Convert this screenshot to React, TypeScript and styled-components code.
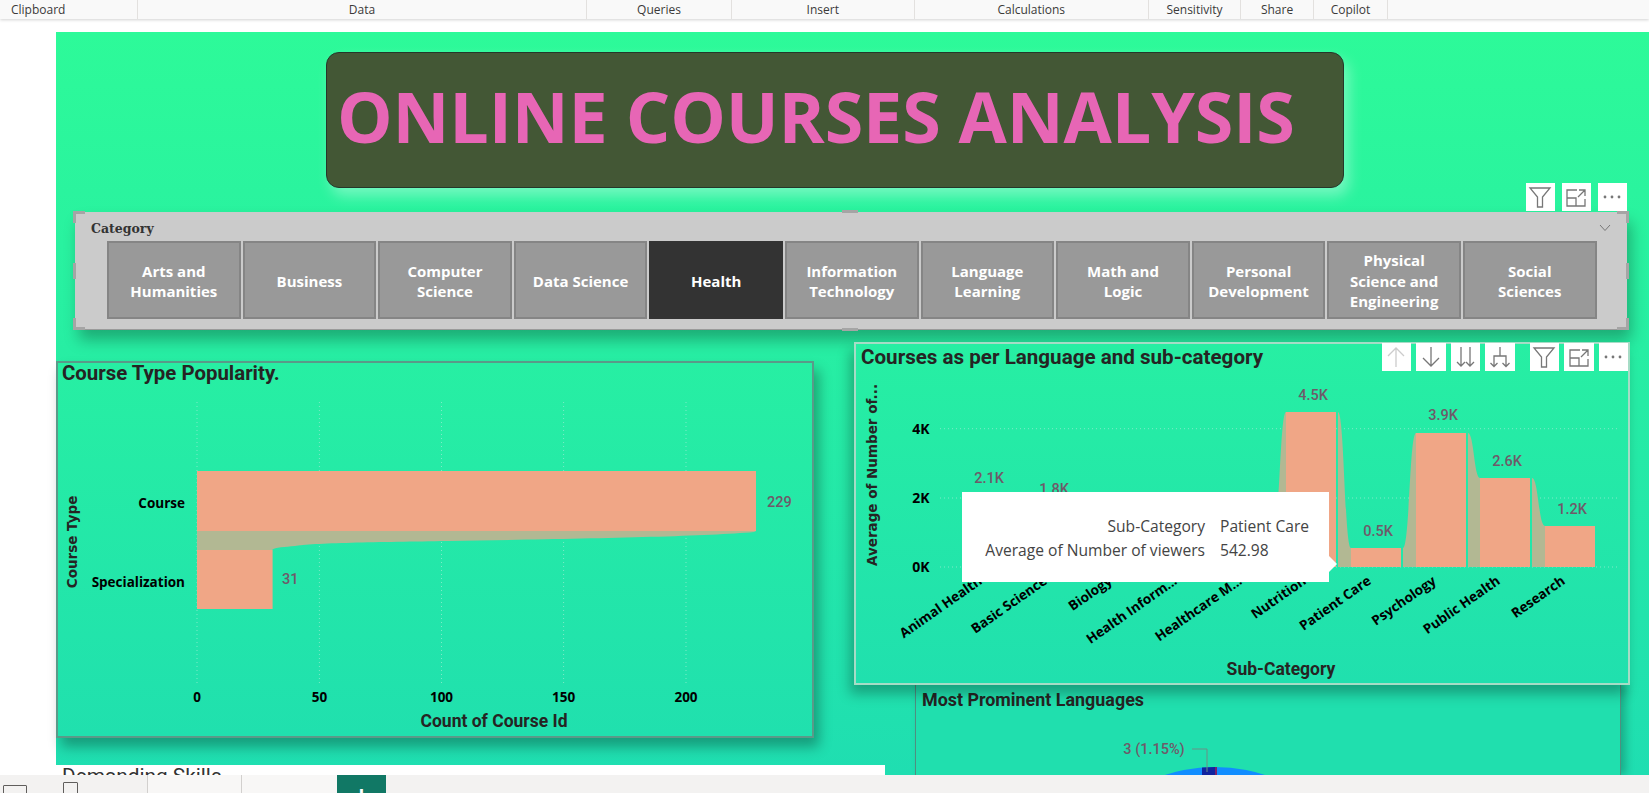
import React from "react";
import styled, { createGlobalStyle } from "styled-components";

const UI_FONT = `"Open Sans", "Noto Sans", sans-serif`;
const HEAD_FONT = `Roboto, "Liberation Sans", sans-serif`;
const WIDE_FONT = `"DejaVu Sans", Verdana, sans-serif`;

const BAR = "#f0a686";
const RIBBON = "#b2b893";
const VALUE = "#6f5a69";
const BASE = 567;

const GlobalStyle = createGlobalStyle`
  html, body {
    margin: 0;
    height: 100%;
    overflow: hidden;
    background: #fff;
    font-family: ${UI_FONT};
  }
  #root { height: 100%; }
`;

const Page = styled.div`
  height: 793px;
  display: flex;
  flex-direction: column;
  overflow: hidden;
`;

const Ribbon = styled.header`
  position: relative;
  z-index: 3;
  flex: 0 0 19px;
  display: flex;
  background: #f9f9f9;
  box-shadow: 0 1px 3px rgba(0, 0, 0, 0.18);
`;

const RibbonGroup = styled.div<{ $w: number; $left?: boolean }>`
  box-sizing: border-box;
  width: ${(p) => p.$w}px;
  display: flex;
  align-items: center;
  justify-content: ${(p) => (p.$left ? "flex-start" : "center")};
  padding-left: ${(p) => (p.$left ? "11px" : "0")};
  border-right: 1px solid #e3e1df;
  font-size: 12px;
  color: #3b3a39;
`;

const Main = styled.main`
  flex: 1;
  min-height: 0;
  overflow: hidden;
  padding: 13px 0 0 56px;
`;

const Canvas = styled.div`
  height: 743px;
  background: linear-gradient(180deg, #2dfa99 0%, #1fdeb1 100%);
  padding-top: 20px;
  box-sizing: border-box;
`;

const TitleBox = styled.div`
  box-sizing: border-box;
  width: 1018px;
  height: 136px;
  margin-left: 270px;
  padding: 0 0 8px 10px;
  display: flex;
  align-items: center;
  background: #435735;
  border: 1px solid #25362a;
  border-radius: 13px;
  box-shadow: 5px 8px 14px rgba(255, 255, 255, 0.35);
`;

const BigTitle = styled.h1`
  margin: 0;
  font-family: ${UI_FONT};
  font-size: 70px;
  font-weight: 700;
  letter-spacing: -0.13px;
  line-height: 1;
  white-space: nowrap;
  color: #e766b5;
`;

const Slicer = styled.section`
  position: relative;
  box-sizing: border-box;
  width: 1552px;
  height: 118px;
  margin: 24px 0 0 19px;
  padding: 8px 0 0 16px;
  background: #cbcbcb;
  border-bottom: 1px solid #9a9a9a;
  box-shadow: 4px 10px 14px rgba(0, 0, 0, 0.28);
`;

const SlicerLabel = styled.div`
  height: 21px;
  font: bold 12.5px/18px "DejaVu Serif", "Liberation Serif", serif;
  color: #333;
`;

const Tiles = styled.div`
  display: flex;
  gap: 2px;
  margin-left: 16px;
`;

const Tile = styled.div<{ $active?: boolean }>`
  box-sizing: border-box;
  width: 133.6px;
  height: 78px;
  padding-top: 2px;
  display: flex;
  align-items: center;
  justify-content: center;
  text-align: center;
  white-space: pre-line;
  font-size: 15px;
  font-weight: 700;
  line-height: 20.4px;
  color: #fff;
  background: ${(p) => (p.$active ? "#333" : "#999")};
  border: 2px solid ${(p) => (p.$active ? "#333" : "#858585")};
`;

const Corner = styled.span<{ $v: "top" | "bottom"; $h: "left" | "right" }>`
  position: absolute;
  width: 9px;
  height: 9px;
  ${(p) => p.$v}: -1px;
  ${(p) => p.$h}: -2px;
  border-${(p) => p.$v}: 3px solid #a5a5a5;
  border-${(p) => p.$h}: 3px solid #a5a5a5;
`;

const SideGrip = styled.span<{ $side: "left" | "right" }>`
  position: absolute;
  ${(p) => p.$side}: -2px;
  top: 51px;
  width: 3px;
  height: 16px;
  background: #a5a5a5;
`;

const EdgeGrip = styled.span<{ $side: "top" | "bottom" }>`
  position: absolute;
  ${(p) => p.$side}: -2px;
  left: 767px;
  width: 16px;
  height: 3px;
  background: #a5a5a5;
`;

const Chevron = styled.svg`
  position: absolute;
  top: 12px;
  right: 16px;
`;

const ToolStrip = styled.div<{ $top: string; $gap?: number }>`
  position: absolute;
  right: 0;
  ${(p) => p.$top};
  display: flex;
  gap: ${(p) => p.$gap ?? 5}px;
`;

const ToolButton = styled.div<{ $gapBefore?: boolean }>`
  width: 29.5px;
  height: 28px;
  margin-left: ${(p) => (p.$gapBefore ? "10px" : "0")};
  display: flex;
  align-items: center;
  justify-content: center;
  background: #fff;
`;

const Board = styled.div`
  display: grid;
  grid-template-columns: 798px 31px 764px;
  grid-template-rows: 343px 80px 1fr;
  height: 433px;
  margin-top: 12px;
`;

const ChartCard = styled.article`
  position: relative;
  box-sizing: border-box;
  background: linear-gradient(180deg, #27efa3 0%, #20e0ae 100%);
`;

const TypeCard = styled(ChartCard)`
  grid-area: 1 / 1 / 3 / 2;
  width: 758px;
  height: 377px;
  margin-top: 19px;
  border: 2px solid #5a9a89;
  box-shadow: 5px 9px 12px rgba(0, 0, 0, 0.3);
`;

const LanguageCard = styled(ChartCard)`
  grid-area: 1 / 2 / 2 / 4;
  z-index: 2;
  width: 776px;
  height: 343px;
  border: 2px solid #a6dcc6;
  box-shadow: -4px 9px 12px rgba(0, 0, 0, 0.28);
`;

const ProminentCard = styled(ChartCard)`
  grid-area: 2 / 3 / 4 / 4;
  width: 706px;
  margin-left: 30px;
  border-left: 1px solid #4f8f80;
  border-right: 1px solid #4f8f80;
  background: #20dfae;
  box-shadow: 5px 0 8px rgba(0, 0, 0, 0.22);
  padding-top: 1px;
`;

const SkillsCard = styled.article`
  grid-area: 3 / 1 / 4 / 3;
  background: #fff;
  padding: 1px 0 0 6px;
  overflow: hidden;
  font: 400 20.8px/20px ${HEAD_FONT};
  color: #333;
`;

const CardTitle = styled.h2`
  margin: 0;
  height: 28px;
  padding-left: 4px;
  font: 700 20.4px/21px ${HEAD_FONT};
  color: #252423;
`;

const LanguageTitle = styled(CardTitle)`
  padding-left: 5px;
  font-size: 20.6px;
  line-height: 26px;
`;

const ProminentTitle = styled(CardTitle)`
  padding-left: 6px;
  font-size: 17.9px;
  line-height: 27px;
`;

const ChartSvg = styled.svg`
  display: block;
`;

const AxisText = styled.text<{ $size?: number }>`
  font-family: ${UI_FONT};
  font-weight: 700;
  font-size: ${(p) => p.$size ?? 13.5}px;
  fill: #000;
`;

const AxisTitle = styled.text`
  font-family: ${HEAD_FONT};
  font-weight: 700;
  font-size: 17.5px;
  fill: #252423;
`;

const SideTitle = styled.text`
  font-family: ${WIDE_FONT};
  font-weight: 700;
  font-size: 13.5px;
  fill: #252423;
`;

const ValueText = styled.text`
  font-family: ${HEAD_FONT};
  font-weight: 500;
  font-size: 14.5px;
  fill: ${VALUE};
`;

const Tooltip = styled.div`
  position: absolute;
  left: 106px;
  top: 148px;
  box-sizing: border-box;
  width: 367px;
  height: 90px;
  padding-top: 22px;
  padding-left: 20px;
  display: grid;
  grid-template-columns: 223px auto;
  grid-auto-rows: 24px;
  column-gap: 15px;
  align-content: start;
  background: #fff;
  font-size: 15.6px;
  line-height: 24px;
  color: #444;

  &::after {
    content: "";
    position: absolute;
    left: 100%;
    top: 64px;
    border-left: 8px solid #fff;
    border-top: 8px solid transparent;
    border-bottom: 8px solid transparent;
  }
`;

const TipKey = styled.span`
  text-align: right;
  white-space: nowrap;
`;

const SheetBar = styled.footer`
  position: relative;
  z-index: 3;
  flex: 0 0 18px;
  display: flex;
  background: #f3f2f1;
  overflow: hidden;
`;

const PageIcons = styled.div`
  width: 147px;
  padding: 7px 0 0 3px;
  box-sizing: border-box;
  display: flex;
  align-items: flex-start;
  gap: 36px;
`;

const WideFrame = styled.span`
  width: 22px;
  height: 18px;
  border: 1px solid #605e5c;
  border-radius: 1px;
  margin-top: 3px;
`;

const TallFrame = styled.span`
  width: 13px;
  height: 20px;
  border: 1px solid #605e5c;
  border-radius: 1px;
`;

const SheetTab = styled.div<{ $w: number }>`
  box-sizing: border-box;
  width: ${(p) => p.$w}px;
  padding-top: 14px;
  border-left: 1px solid #d2d0ce;
  background: #f8f7f6;
  text-align: center;
  font-size: 13px;
  color: #444;
`;

const AddTab = styled.div`
  width: 49px;
  display: flex;
  justify-content: center;
  padding-top: 12px;
  box-sizing: border-box;
  background: #117865;
  color: #fff;
  font-size: 26px;
  font-weight: 700;
  line-height: 16px;
`;

const ribbonGroups: [string, number][] = [
  ["Clipboard", 138],
  ["Data", 449],
  ["Queries", 145],
  ["Insert", 182.5],
  ["Calculations", 234.5],
  ["Sensitivity", 92],
  ["Share", 73],
  ["Copilot", 74],
];

const categories = [
  "Arts and\nHumanities",
  "Business",
  "Computer\nScience",
  "Data Science",
  "Health",
  "Information\nTechnology",
  "Language\nLearning",
  "Math and\nLogic",
  "Personal\nDevelopment",
  "Physical\nScience and\nEngineering",
  "Social\nSciences",
];

const subCategories = [
  { name: "Animal Health", left: 962, top: 494, label: "2.1K", labelY: 483 },
  { name: "Basic Science", left: 1027, top: 505, label: "1.8K", labelY: 494 },
  { name: "Biology", left: 1092, top: 530 },
  { name: "Health Inform...", left: 1157, top: 540 },
  { name: "Healthcare M...", left: 1222, top: 525 },
  { name: "Nutrition", left: 1286, top: 412, label: "4.5K", labelY: 400 },
  { name: "Patient Care", left: 1351, top: 548, label: "0.5K", labelY: 536 },
  { name: "Psychology", left: 1416, top: 433, label: "3.9K", labelY: 420 },
  { name: "Public Health", left: 1480, top: 478, label: "2.6K", labelY: 466 },
  { name: "Research", left: 1545, top: 526, label: "1.2K", labelY: 514 },
];

const BAR_W = 52;

const ribbonPath = (x1: number, y1: number, x2: number, y2: number) => {
  const mid = (x1 + x2) / 2;
  return `M${x1} ${y1}C${mid} ${y1} ${mid} ${y2} ${x2} ${y2}V${BASE}H${x1}Z`;
};

const ToolIcon = ({ d, color = "#777" }: { d: string; color?: string }) => (
  <svg width="28" height="28" viewBox="0 0 28 28" fill="none" stroke={color} strokeWidth="1.3">
    <path d={d} />
  </svg>
);

const MoreIcon = () => (
  <svg width="28" height="28" viewBox="0 0 28 28" fill="#777">
    <circle cx="7" cy="14" r="1.4" />
    <circle cx="14" cy="14" r="1.4" />
    <circle cx="21" cy="14" r="1.4" />
  </svg>
);

const FILTER = "M4 5H24L16.5 14V24H11.5V14Z";
const FOCUS = "M15 7H5V23H23V16M5 15H14V23M17 7H23V13M23 7L16 14";
const UP = "M14 24V5M6 13L14 5L22 13";
const DOWN = "M14 4V23M6 15L14 23L22 15";
const DRILL_ALL = "M10 4V23M6 19L10 23L14 19M19 4V23M15 19L19 23L23 19";
const EXPAND = "M14 4V13M8 23V13H20V23M4.5 20L8 23.5L11.5 20M16.5 20L20 23.5L23.5 20";

const VisualTools = () => (
  <>
    <ToolButton>
      <ToolIcon d={FILTER} />
    </ToolButton>
    <ToolButton>
      <ToolIcon d={FOCUS} />
    </ToolButton>
    <ToolButton>
      <MoreIcon />
    </ToolButton>
  </>
);

const TypeChart = () => (
  <ChartSvg width="754" height="345" viewBox="58 391 754 345">
    {[197, 319.4, 441.5, 563.6, 686].map((x) => (
      <line key={x} x1={x} x2={x} y1={402} y2={685} stroke="#7debc8" strokeDasharray="1 3" />
    ))}
    <path
      d="M197 531H756L754 532C700 537 560 539 448 541C380 542 310 543 295 546C285 547 275 547 272 550H197Z"
      fill={RIBBON}
    />
    <rect x={197} y={471} width={559} height={60} fill={BAR} />
    <rect x={197} y={550} width={75.6} height={59} fill={BAR} />
    <ValueText x={767} y={507}>229</ValueText>
    <ValueText x={282} y={584}>31</ValueText>
    <AxisText x={185} y={508} textAnchor="end">Course</AxisText>
    <AxisText x={185} y={587} textAnchor="end">Specialization</AxisText>
    {[
      ["0", 197],
      ["50", 319.4],
      ["100", 441.5],
      ["150", 563.6],
      ["200", 686],
    ].map(([t, x]) => (
      <AxisText key={t} x={x} y={702} textAnchor="middle">{t}</AxisText>
    ))}
    <AxisTitle x={494} y={727} textAnchor="middle">Count of Course Id</AxisTitle>
    <SideTitle transform="translate(77 542) rotate(-90)" textAnchor="middle">Course Type</SideTitle>
  </ChartSvg>
);

const LanguageChart = () => (
  <ChartSvg width="772" height="311" viewBox="856 372 772 311">
    {[428.7, 498, 567].map((y) => (
      <line key={y} x1={940} x2={1617} y1={y} y2={y} stroke="#7debc8" strokeDasharray="1 3" />
    ))}
    {subCategories.slice(0, -1).map((c, i) => {
      const next = subCategories[i + 1];
      return <path key={c.name} d={ribbonPath(c.left + BAR_W, c.top, next.left, next.top)} fill={RIBBON} />;
    })}
    {subCategories.map((c) => (
      <rect key={c.name} x={c.left} y={c.top} width={BAR_W - 2} height={BASE - c.top} fill={BAR} />
    ))}
    {subCategories.map((c) =>
      c.label ? (
        <ValueText key={c.name} x={c.left + 27} y={c.labelY} textAnchor="middle">{c.label}</ValueText>
      ) : null
    )}
    {subCategories.map((c) => (
      <AxisText
        key={c.name}
        $size={13.5}
        textAnchor="end"
        transform={`translate(${c.left + 21} 583) rotate(-35)`}
      >
        {c.name}
      </AxisText>
    ))}
    {[
      ["4K", 434],
      ["2K", 503],
      ["0K", 572],
    ].map(([t, y]) => (
      <AxisText key={t} x={921} y={y} textAnchor="middle" $size={14}>{t}</AxisText>
    ))}
    <SideTitle transform="translate(877 475) rotate(-90)" textAnchor="middle">Average of Number of...</SideTitle>
    <AxisTitle x={1281} y={675} textAnchor="middle">Sub-Category</AxisTitle>
  </ChartSvg>
);

const LanguagePie = () => (
  <ChartSvg width="704" height="62" viewBox="916 714 704 62">
    <circle cx={1215} cy={927} r={160} fill="#118dff" />
    <path d="M1202 767.5L1215 767V790H1202Z" fill="#12239e" />
    <path d="M1215 767H1217V790H1215Z" fill="#7a1f6e" />
    <path d="M1192 749H1207V772" fill="none" stroke="#6b8f86" />
    <ValueText x={1154} y={754} textAnchor="middle">3 (1.15%)</ValueText>
  </ChartSvg>
);

const App = () => {
  return (
    <Page>
      <GlobalStyle />
      <Ribbon>
        {ribbonGroups.map(([name, w], i) => (
          <RibbonGroup key={name} $w={w} $left={i === 0}>
            {name}
          </RibbonGroup>
        ))}
      </Ribbon>

      <Main>
        <Canvas>
          <TitleBox>
            <BigTitle>ONLINE COURSES ANALYSIS</BigTitle>
          </TitleBox>

          <Slicer>
            <ToolStrip $top="bottom: calc(100% + 1px);" $gap={6.5}>
              <VisualTools />
            </ToolStrip>
            <SlicerLabel>Category</SlicerLabel>
            <Tiles>
              {categories.map((c) => (
                <Tile key={c} $active={c === "Health"}>
                  {c}
                </Tile>
              ))}
            </Tiles>
            <Chevron width="12" height="8" viewBox="0 0 12 8" fill="none" stroke="#777">
              <path d="M1 1L6 6.5L11 1" />
            </Chevron>
            <Corner $v="top" $h="left" />
            <Corner $v="top" $h="right" />
            <Corner $v="bottom" $h="left" />
            <Corner $v="bottom" $h="right" />
            <SideGrip $side="left" />
            <SideGrip $side="right" />
            <EdgeGrip $side="top" />
            <EdgeGrip $side="bottom" />
          </Slicer>

          <Board>
            <TypeCard>
              <CardTitle>Course Type Popularity.</CardTitle>
              <TypeChart />
            </TypeCard>

            <ProminentCard>
              <ProminentTitle>Most Prominent Languages</ProminentTitle>
              <LanguagePie />
            </ProminentCard>

            <SkillsCard>Demanding Skills</SkillsCard>

            <LanguageCard>
              <LanguageTitle>Courses as per Language and sub-category</LanguageTitle>
              <ToolStrip $top="top: -1px;">
                <ToolButton>
                  <ToolIcon d={UP} color="#ccc" />
                </ToolButton>
                <ToolButton>
                  <ToolIcon d={DOWN} />
                </ToolButton>
                <ToolButton>
                  <ToolIcon d={DRILL_ALL} />
                </ToolButton>
                <ToolButton>
                  <ToolIcon d={EXPAND} />
                </ToolButton>
                <ToolButton $gapBefore>
                  <ToolIcon d={FILTER} />
                </ToolButton>
                <ToolButton>
                  <ToolIcon d={FOCUS} />
                </ToolButton>
                <ToolButton>
                  <MoreIcon />
                </ToolButton>
              </ToolStrip>
              <LanguageChart />
              <Tooltip>
                <TipKey>Sub-Category</TipKey>
                <span>Patient Care</span>
                <TipKey>Average of Number of viewers</TipKey>
                <span>542.98</span>
              </Tooltip>
            </LanguageCard>
          </Board>
        </Canvas>
      </Main>

      <SheetBar>
        <PageIcons>
          <WideFrame />
          <TallFrame />
        </PageIcons>
        <SheetTab $w={94}>Page 1</SheetTab>
        <SheetTab $w={96}>Page 2</SheetTab>
        <AddTab>+</AddTab>
      </SheetBar>
    </Page>
  );
};

export default App;
